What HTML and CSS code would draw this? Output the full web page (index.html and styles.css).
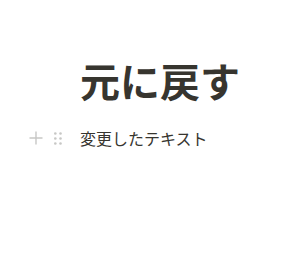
FILE: index.html
```html
<!DOCTYPE html>
<html lang="ja">
<head>
    <meta charset="UTF-8">
    <meta name="viewport" content="width=device-width, initial-scale=1.0">
    <title>元に戻す</title>
    <link rel="stylesheet" href="styles.css">
</head>
<body>

    <div class="page">
        <h1 class="page-title">元に戻す</h1>

        <!-- ブロック -->
        <div class="block">
            <div class="block-handles">
                <svg class="handle-plus" width="14" height="14" viewBox="0 0 14 14">
                    <path d="M7 0.5v13M0.5 7h13" stroke="currentColor" stroke-width="1.4" fill="none"/>
                </svg>
                <svg class="handle-drag" width="8" height="13" viewBox="0 0 8 13">
                    <circle cx="1.3" cy="1.5" r="1.3"/>
                    <circle cx="6.5" cy="1.5" r="1.3"/>
                    <circle cx="1.3" cy="6.5" r="1.3"/>
                    <circle cx="6.5" cy="6.5" r="1.3"/>
                    <circle cx="1.3" cy="11.5" r="1.3"/>
                    <circle cx="6.5" cy="11.5" r="1.3"/>
                </svg>
            </div>
            <div class="block-text">変更したテキスト</div>
        </div>
    </div>

</body>
</html>
```

FILE: styles.css
```css
body {
    font-family: "Noto Sans CJK JP", "Noto Sans", sans-serif;
    margin: 0;
    background-color: #fff;
    color: #37352f;
}

.page {
    padding: 55px 20px 0 80px;
}

.page-title {
    margin: 0;
    font-size: 40px;
    font-weight: 700;
    line-height: 50px;
}

.block {
    display: flex;
    align-items: center;
    margin-top: 21px;
    margin-left: -51px;
}

.block-handles {
    display: flex;
    align-items: center;
    gap: 11px;
    width: 51px;
    color: rgba(55, 53, 47, 0.28);
    fill: rgba(55, 53, 47, 0.28);
}

.block-text {
    font-size: 16px;
    line-height: 24px;
}
```
